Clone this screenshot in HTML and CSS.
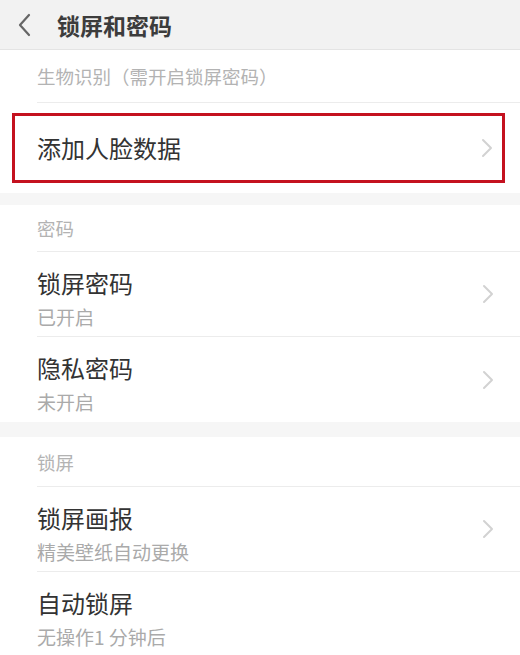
FILE: index.html
```html
<!DOCTYPE html>
<html lang="zh-CN">
<head>
<meta charset="utf-8">
<title>锁屏和密码</title>
<link rel="stylesheet" href="styles.css">
</head>
<body>
<header class="topbar">
  <svg class="back" width="14" height="24" viewBox="0 0 14 24"><path d="M12 2 L3 12 L12 22" fill="none" stroke="#666" stroke-width="2.2" stroke-linecap="round" stroke-linejoin="round"/></svg>
  <h1 class="title">锁屏和密码</h1>
</header>

<section class="section">
  <div class="sec-head sec-head-first">生物识别（需开启锁屏密码）</div>
  <div class="row-mark">
    <div class="mark-box">
      <span class="item-title">添加人脸数据</span>
      <svg class="chev" width="12" height="20" viewBox="0 0 12 20"><path d="M2 2 L10 10 L2 18" fill="none" stroke="#d2d2d2" stroke-width="2" stroke-linecap="round" stroke-linejoin="round"/></svg>
    </div>
  </div>
</section>

<section class="section section-mid">
  <div class="sec-head sec-head-mid">密码</div>
  <div class="item">
    <div class="item-text">
      <span class="item-title">锁屏密码</span>
      <span class="item-sub">已开启</span>
    </div>
    <svg class="chev" width="12" height="20" viewBox="0 0 12 20"><path d="M2 2 L10 10 L2 18" fill="none" stroke="#d2d2d2" stroke-width="2" stroke-linecap="round" stroke-linejoin="round"/></svg>
  </div>
  <div class="item">
    <div class="item-text">
      <span class="item-title">隐私密码</span>
      <span class="item-sub">未开启</span>
    </div>
    <svg class="chev" width="12" height="20" viewBox="0 0 12 20"><path d="M2 2 L10 10 L2 18" fill="none" stroke="#d2d2d2" stroke-width="2" stroke-linecap="round" stroke-linejoin="round"/></svg>
  </div>
</section>

<section class="section section-last">
  <div class="sec-head">锁屏</div>
  <div class="item">
    <div class="item-text">
      <span class="item-title">锁屏画报</span>
      <span class="item-sub">精美壁纸自动更换</span>
    </div>
    <svg class="chev" width="12" height="20" viewBox="0 0 12 20"><path d="M2 2 L10 10 L2 18" fill="none" stroke="#d2d2d2" stroke-width="2" stroke-linecap="round" stroke-linejoin="round"/></svg>
  </div>
  <div class="item">
    <div class="item-text">
      <span class="item-title">自动锁屏</span>
      <span class="item-sub">无操作1 分钟后</span>
    </div>
  </div>
</section>
</body>
</html>
```

FILE: styles.css
```css
* { box-sizing: border-box; margin: 0; padding: 0; }
html, body { width: 520px; height: 655px; overflow: hidden; }
body {
  background: #f6f6f6;
  font-family: "Noto Sans CJK SC", "Noto Sans", sans-serif;
  color: #333;
}
.topbar {
  height: 50px;
  background: #f2f2f2;
  border-bottom: 1px solid #e4e4e4;
  display: flex;
  align-items: center;
  padding-left: 17px;
}
.back { display: block; margin-right: 26px; }
.title {
  font-size: 23px;
  font-weight: 700;
  color: #3c3c3c;
  line-height: 30px;
}
.section {
  background: #fff;
  padding-left: 37px;
}
.section-mid { margin-top: 12px; }
.section-last { margin-top: 15px; }
.sec-head {
  height: 50px;
  display: flex;
  align-items: center;
  font-size: 18.5px;
  color: #b3b3b3;
  border-bottom: 1px solid #ececec;
}
.sec-head-first { height: 53px; }
.sec-head-mid { height: 47px; }
.row-mark {
  margin-left: -25px;
  padding: 10px 15px 10px 0;
}
.mark-box {
  height: 70px;
  border: 3px solid #c4111f;
  display: flex;
  align-items: center;
  justify-content: space-between;
  padding: 0 9px 0 22px;
}
.item {
  height: 85px;
  display: flex;
  align-items: center;
  justify-content: space-between;
  padding-right: 26px;
  border-bottom: 1px solid #ececec;
}
.item:last-child { border-bottom: none; }
.item-text {
  display: flex;
  flex-direction: column;
  align-self: flex-start;
  padding-top: 16px;
}
.item-title {
  font-size: 24px;
  line-height: 30px;
  color: #333;
  font-weight: 400;
}
.item-sub {
  font-size: 19px;
  line-height: 26px;
  margin-top: 6px;
  color: #aaa;
}
.chev { display: block; }
```
